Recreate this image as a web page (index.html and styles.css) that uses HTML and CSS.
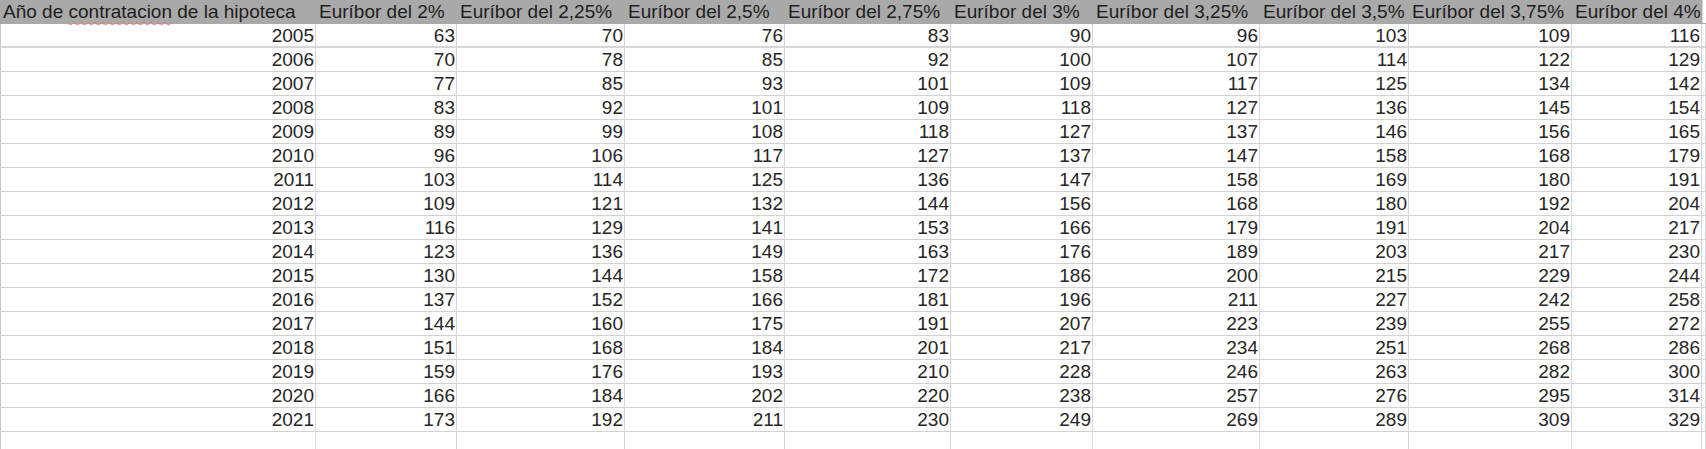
FILE: index.html
```html
<!DOCTYPE html>
<html lang="es">
<head>
<meta charset="utf-8">
<title>Euríbor hipoteca</title>
<link rel="stylesheet" href="styles.css">
</head>
<body>
<div class="sheet">
  <div class="row head">
    <div class="cell">Año de <span class="typo">contratacion</span> de la hipoteca</div>
    <div class="cell">Euríbor del 2%</div>
    <div class="cell">Euríbor del 2,25%</div>
    <div class="cell">Euríbor del 2,5%</div>
    <div class="cell">Euríbor del 2,75%</div>
    <div class="cell">Euríbor del 3%</div>
    <div class="cell">Euríbor del 3,25%</div>
    <div class="cell">Euríbor del 3,5%</div>
    <div class="cell">Euríbor del 3,75%</div>
    <div class="cell">Euríbor del 4%</div>
    <div class="cell blank"></div>
  </div>
  <div class="row first"><div class="cell">2005</div><div class="cell">63</div><div class="cell">70</div><div class="cell">76</div><div class="cell">83</div><div class="cell">90</div><div class="cell">96</div><div class="cell">103</div><div class="cell">109</div><div class="cell">116</div><div class="cell"></div></div>
  <div class="row"><div class="cell">2006</div><div class="cell">70</div><div class="cell">78</div><div class="cell">85</div><div class="cell">92</div><div class="cell">100</div><div class="cell">107</div><div class="cell">114</div><div class="cell">122</div><div class="cell">129</div><div class="cell"></div></div>
  <div class="row"><div class="cell">2007</div><div class="cell">77</div><div class="cell">85</div><div class="cell">93</div><div class="cell">101</div><div class="cell">109</div><div class="cell">117</div><div class="cell">125</div><div class="cell">134</div><div class="cell">142</div><div class="cell"></div></div>
  <div class="row"><div class="cell">2008</div><div class="cell">83</div><div class="cell">92</div><div class="cell">101</div><div class="cell">109</div><div class="cell">118</div><div class="cell">127</div><div class="cell">136</div><div class="cell">145</div><div class="cell">154</div><div class="cell"></div></div>
  <div class="row"><div class="cell">2009</div><div class="cell">89</div><div class="cell">99</div><div class="cell">108</div><div class="cell">118</div><div class="cell">127</div><div class="cell">137</div><div class="cell">146</div><div class="cell">156</div><div class="cell">165</div><div class="cell"></div></div>
  <div class="row"><div class="cell">2010</div><div class="cell">96</div><div class="cell">106</div><div class="cell">117</div><div class="cell">127</div><div class="cell">137</div><div class="cell">147</div><div class="cell">158</div><div class="cell">168</div><div class="cell">179</div><div class="cell"></div></div>
  <div class="row"><div class="cell">2011</div><div class="cell">103</div><div class="cell">114</div><div class="cell">125</div><div class="cell">136</div><div class="cell">147</div><div class="cell">158</div><div class="cell">169</div><div class="cell">180</div><div class="cell">191</div><div class="cell"></div></div>
  <div class="row"><div class="cell">2012</div><div class="cell">109</div><div class="cell">121</div><div class="cell">132</div><div class="cell">144</div><div class="cell">156</div><div class="cell">168</div><div class="cell">180</div><div class="cell">192</div><div class="cell">204</div><div class="cell"></div></div>
  <div class="row"><div class="cell">2013</div><div class="cell">116</div><div class="cell">129</div><div class="cell">141</div><div class="cell">153</div><div class="cell">166</div><div class="cell">179</div><div class="cell">191</div><div class="cell">204</div><div class="cell">217</div><div class="cell"></div></div>
  <div class="row"><div class="cell">2014</div><div class="cell">123</div><div class="cell">136</div><div class="cell">149</div><div class="cell">163</div><div class="cell">176</div><div class="cell">189</div><div class="cell">203</div><div class="cell">217</div><div class="cell">230</div><div class="cell"></div></div>
  <div class="row"><div class="cell">2015</div><div class="cell">130</div><div class="cell">144</div><div class="cell">158</div><div class="cell">172</div><div class="cell">186</div><div class="cell">200</div><div class="cell">215</div><div class="cell">229</div><div class="cell">244</div><div class="cell"></div></div>
  <div class="row"><div class="cell">2016</div><div class="cell">137</div><div class="cell">152</div><div class="cell">166</div><div class="cell">181</div><div class="cell">196</div><div class="cell">211</div><div class="cell">227</div><div class="cell">242</div><div class="cell">258</div><div class="cell"></div></div>
  <div class="row"><div class="cell">2017</div><div class="cell">144</div><div class="cell">160</div><div class="cell">175</div><div class="cell">191</div><div class="cell">207</div><div class="cell">223</div><div class="cell">239</div><div class="cell">255</div><div class="cell">272</div><div class="cell"></div></div>
  <div class="row"><div class="cell">2018</div><div class="cell">151</div><div class="cell">168</div><div class="cell">184</div><div class="cell">201</div><div class="cell">217</div><div class="cell">234</div><div class="cell">251</div><div class="cell">268</div><div class="cell">286</div><div class="cell"></div></div>
  <div class="row"><div class="cell">2019</div><div class="cell">159</div><div class="cell">176</div><div class="cell">193</div><div class="cell">210</div><div class="cell">228</div><div class="cell">246</div><div class="cell">263</div><div class="cell">282</div><div class="cell">300</div><div class="cell"></div></div>
  <div class="row"><div class="cell">2020</div><div class="cell">166</div><div class="cell">184</div><div class="cell">202</div><div class="cell">220</div><div class="cell">238</div><div class="cell">257</div><div class="cell">276</div><div class="cell">295</div><div class="cell">314</div><div class="cell"></div></div>
  <div class="row"><div class="cell">2021</div><div class="cell">173</div><div class="cell">192</div><div class="cell">211</div><div class="cell">230</div><div class="cell">249</div><div class="cell">269</div><div class="cell">289</div><div class="cell">309</div><div class="cell">329</div><div class="cell"></div></div>
  <div class="row empty"><div class="cell"></div><div class="cell"></div><div class="cell"></div><div class="cell"></div><div class="cell"></div><div class="cell"></div><div class="cell"></div><div class="cell"></div><div class="cell"></div><div class="cell"></div><div class="cell"></div></div>
</div>
</body>
</html>
```
FILE: styles.css
```css
html, body {
  margin: 0;
  padding: 0;
  background: #ffffff;
  overflow: hidden;
}

.sheet {
  font-family: "Liberation Sans", Arial, sans-serif;
  font-size: 19px;
  color: #262626;
}

.row {
  display: grid;
  grid-template-columns: 316px 141px 168px 160px 166px 142px 167px 149px 163px 130px 1fr;
  height: 24px;
  box-sizing: border-box;
  border-bottom: 1px solid #d2d2d2;
  box-shadow: inset 1px 0 0 #c8c8c8;
}

.row.first {
  border-bottom: 2px solid #d6d6d6;
}

.row.empty {
  border-bottom: none;
}

.cell {
  box-sizing: border-box;
  border-right: 1px solid #d6d6d6;
  padding: 1px 1px 0 2px;
  line-height: 22px;
  text-align: right;
  white-space: nowrap;
  overflow: visible;
}

.head {
  border-bottom: 1px solid #a9a9a9;
  box-shadow: none;
}

.head .cell {
  background: #a9a9a9;
  border-right-color: #a9a9a9;
  text-align: left;
  padding: 0 0 0 3px;
  line-height: 23px;
  color: #1e1e1e;
}

.head .cell.blank {
  background: #ffffff;
  border-right: none;
  box-shadow: inset 1px 0 0 #d6d6d6;
}

.typo {
  text-decoration: underline wavy #e07070;
  text-decoration-thickness: 1px;
  text-underline-offset: 3px;
}
```
